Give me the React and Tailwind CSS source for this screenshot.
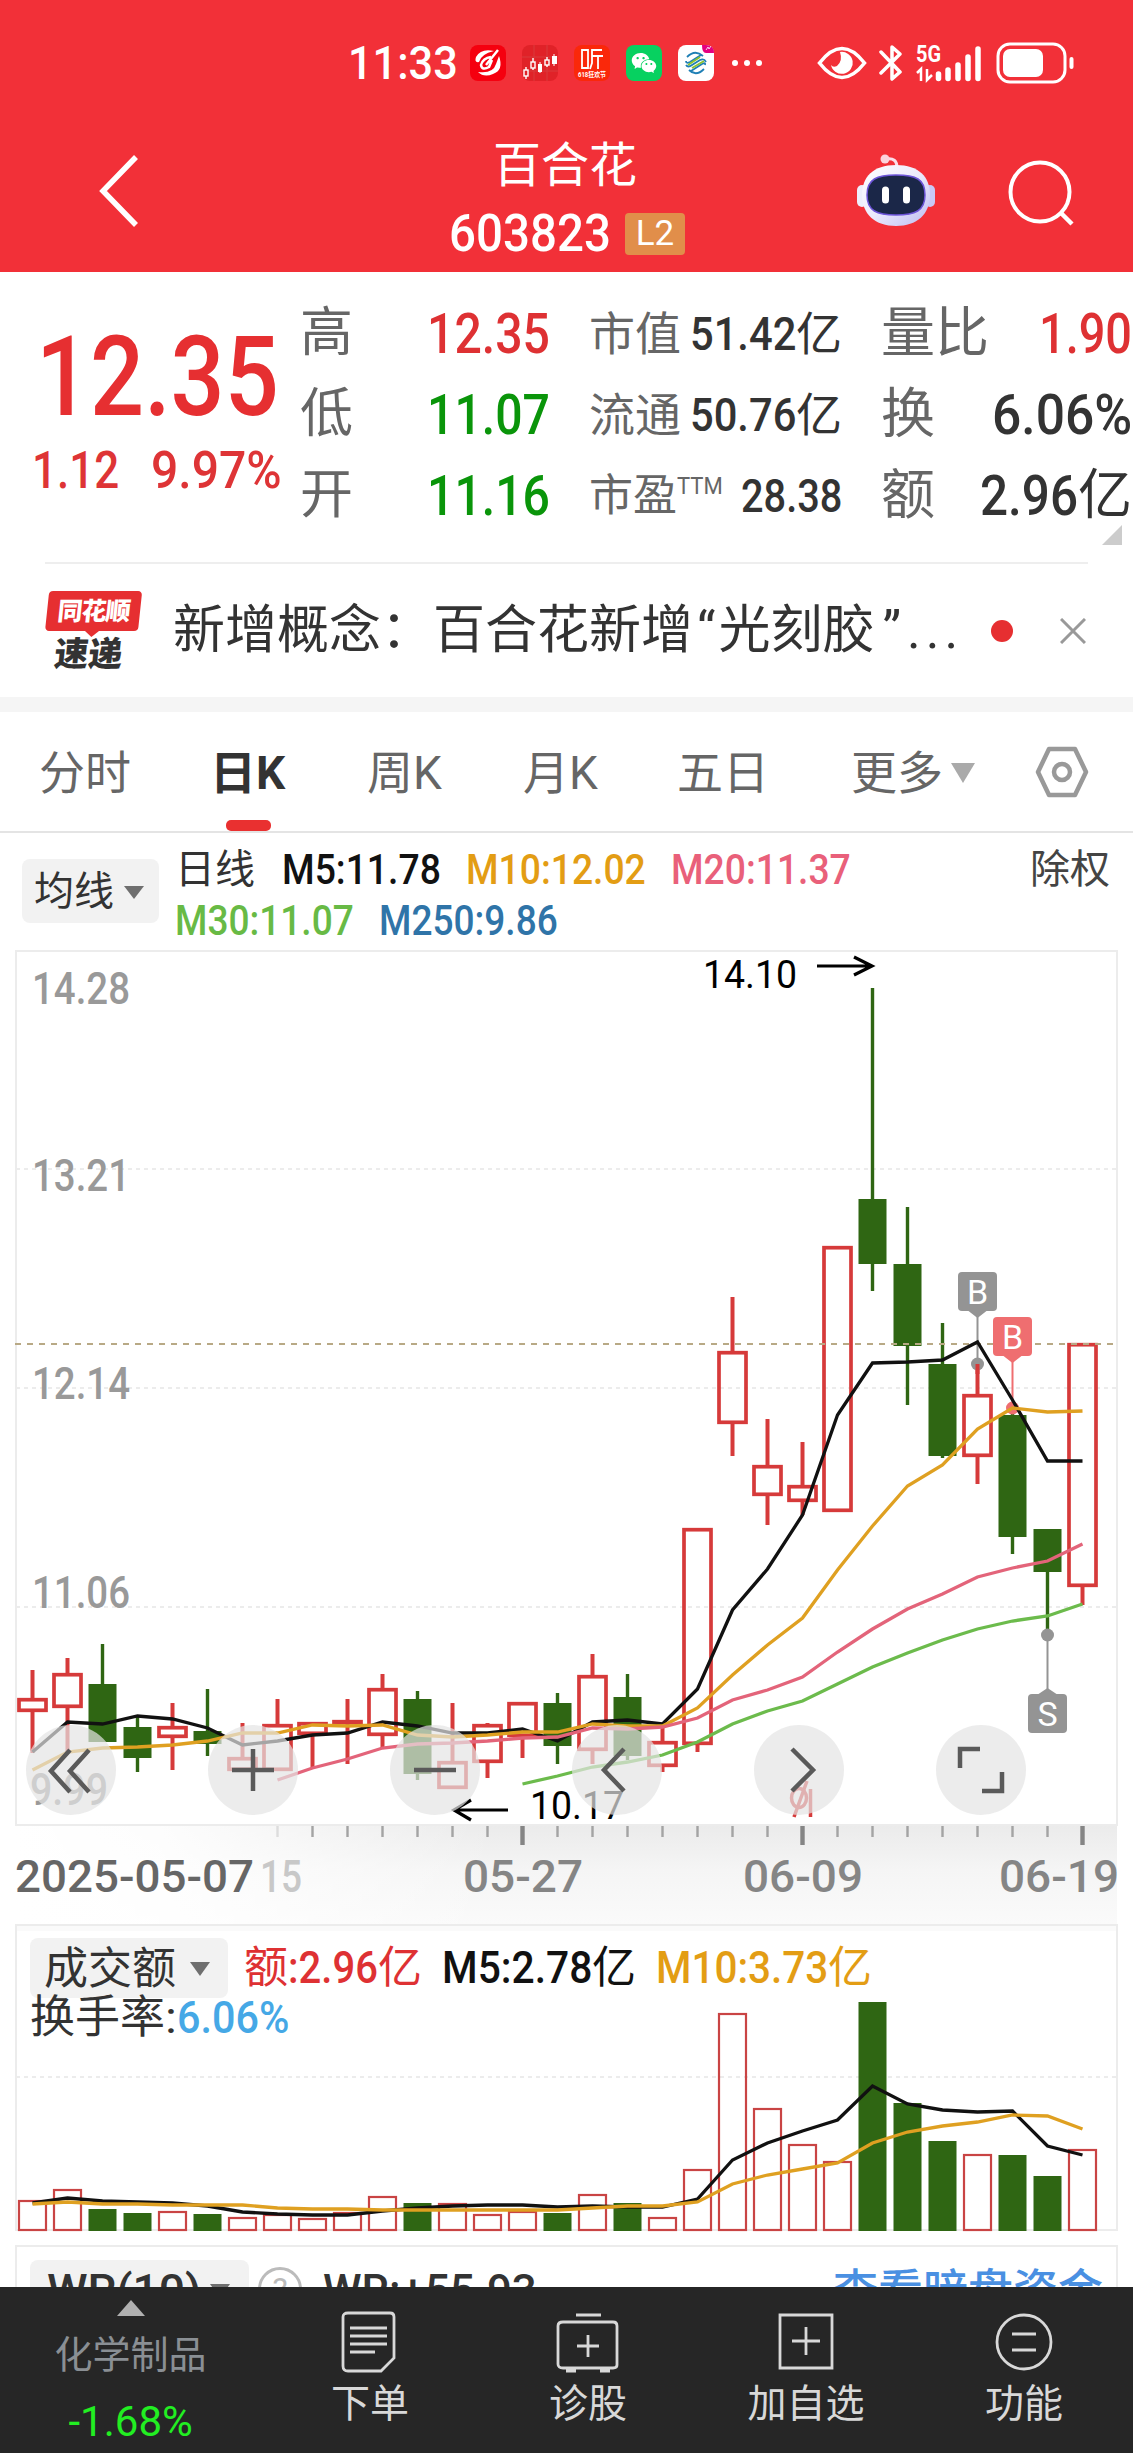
import React, { useLayoutEffect, useRef } from 'react';
import { AiFillWechat } from 'react-icons/ai';

// Stretches or condenses one line of text so it fills the width of its box
const Fit = ({ className = '', children }) => {
  const box = useRef(null);
  const text = useRef(null);

  useLayoutEffect(() => {
    const ratio = box.current.clientWidth / text.current.offsetWidth;
    text.current.style.transform = `scaleX(${ratio})`;
  }, []);

  return (
    <span ref={box} className={`block shrink-0 whitespace-nowrap leading-none ${className}`}>
      <span ref={text} className="inline-block origin-left">{children}</span>
    </span>
  );
};

const StatusBar = () => (
  <div className="flex h-[126px] items-center pl-[348px]">
    <Fit className="w-[110px] text-[46px] font-medium">11:33</Fit>
    <div className="ml-3 flex gap-4">
      <svg className="h-9 w-9" viewBox="0 0 36 36">
        <rect width="36" height="36" rx="8" fill="#f5000f" />
        <path d="M24 6 Q11 3 6 12 Q4 18 9 17 Q11 9 24 6Z" fill="#fff" />
        <path d="M29 11 Q34 25 23 29 Q14 33 8 27 Q23 29 26 19Z" fill="#fff" />
        <path d="M28 5 L16 20 M21 12 Q13 13 11 20 Q12 26 19 22 L22 15" fill="none" stroke="#fff" strokeWidth="2.500" />
      </svg>
      <svg className="h-9 w-9" viewBox="0 0 36 36">
        <rect width="36" height="36" rx="8" fill="#e02228" />
        <path d="M12 0V36 M25 0V36 M0 12H36 M0 26H36" stroke="#d93a3c" strokeWidth="1" />
        <g fill="none" stroke="#fff" strokeWidth="1.4">
          <path d="M4 22V34 M11 13V25 M25 12V22" />
          <rect x="2" y="25" width="4" height="6" fill="#e02228" />
          <rect x="9" y="17" width="4" height="6" fill="#e02228" />
          <rect x="23" y="15" width="4" height="5" fill="#e02228" />
        </g>
        <path d="M16 19h4v8h-4z M30 11h5v8h-5z" fill="#fff" />
        <path d="M18 17V28 M32 9V21" stroke="#fff" />
      </svg>
      <svg className="h-9 w-9" viewBox="0 0 36 36">
        <rect width="36" height="36" rx="8" fill="#fa280a" />
        <g fill="none" stroke="#fff" strokeWidth="1.8">
          <path d="M8 5H14V23H8Z M28 5H18V18L16 24 M18 11H29 M24 11V24" />
        </g>
        <text x="4" y="32" textLength="28" lengthAdjust="spacingAndGlyphs" fontSize="6.500" fontWeight="700" fill="#fff">618狂欢节</text>
      </svg>
      <div className="flex h-9 w-9 items-center justify-center rounded-lg bg-[#07d160] text-[28px]">
        <AiFillWechat />
      </div>
      <svg className="h-9 w-9" viewBox="0 0 36 36">
        <rect width="36" height="36" rx="8" fill="#fff" />
        <path d="M24 0h4q8 0 8 8H28q-4 0-4-8Z" fill="#e5007f" />
        <path d="M28 5l2-3 1 2 2-3" stroke="#fff" fill="none" strokeWidth=".8" />
        <g fill="none" strokeWidth="1.8">
          <path d="M9 12 Q17 4 25 11 M8 16 Q8 19 12 17 L23 10 M8 20 Q10 23 14 20 L22 15 Q26 13 28 17 M27 20 Q28 17 24 19 L13 26 M11 25 Q18 32 26 24" stroke="#1f7fb5" />
          <path d="M10 20 L22 12 M14 23 L26 16" stroke="#8cc22e" />
        </g>
      </svg>
    </div>
    <div className="ml-[18px] flex gap-[6px]">
      <i className="h-1.5 w-1.5 rounded-full bg-white" />
      <i className="h-1.5 w-1.5 rounded-full bg-white" />
      <i className="h-1.5 w-1.5 rounded-full bg-white" />
    </div>
    <svg className="ml-[55px] h-9 w-[50px]" viewBox="0 0 50 36">
      <path d="M2.500 18 Q25 -11 47.500 18 Q25 47 2.500 18Z" fill="none" stroke="#fff" strokeWidth="3.600" />
      <path d="M23 7 A11 11 0 1 1 14 20 Q16 23 20 21 Q26 16 23 7Z" fill="#fff" />
    </svg>
    <svg className="ml-3 h-[38px] w-6" viewBox="0 0 24 38">
      <path d="M2 8 L21 28 L13 35 V3 L21 10 L2 29" fill="none" stroke="#fff" strokeWidth="3.500" strokeLinecap="round" strokeLinejoin="round" />
    </svg>
    <svg className="ml-[13px] h-10 w-[66px]" viewBox="0 0 66 40">
      <text x="0" y="19" textLength="25" lengthAdjust="spacingAndGlyphs" fontSize="23" fontWeight="700" fill="#fff">5G</text>
      <path d="M1 30 L5 26 V38 M11 26 V37 L16 32" fill="none" stroke="#fff" strokeWidth="2.500" />
      <path d="M22.500 31V35.500 M32 27V35.500 M42 22V35.500 M52 14V35.500 M62 6V35.500" stroke="#fff" strokeWidth="5.500" strokeLinecap="round" />
    </svg>
    <svg className="ml-3.5 h-[42px] w-20" viewBox="0 0 80 42">
      <rect x="2" y="2" width="67" height="38" rx="12" fill="none" stroke="#fff" strokeWidth="3" />
      <rect x="7" y="7" width="40" height="28" rx="7" fill="#fff" />
      <path d="M75.500 17V25" stroke="#fff" strokeWidth="4" strokeLinecap="round" />
    </svg>
  </div>
);

const TitleBar = () => (
  <div className="flex h-[146px] items-start">
    <svg className="ml-[95px] mt-[27px] h-[76px] w-12" viewBox="0 0 48 76">
      <path d="M41 4 L8 38 L41 72" fill="none" stroke="#fff" strokeWidth="5.500" />
    </svg>
    <div className="ml-[305px] mt-[16px] flex w-[238px] flex-col items-center">
      <h1 className="-ml-1 text-[48px] leading-[48px]">百合花</h1>
      <div className="mt-[18px] flex items-center gap-[14px]">
        <Fit className="w-[162px] text-[51px] font-medium">603823</Fit>
        <span className="flex h-[42px] w-[60px] items-center justify-center rounded bg-[#e18e4a] text-[35px] leading-none">L2</span>
      </div>
    </div>
    <svg className="ml-[171px] mt-[28px] h-[75px] w-[78px]" viewBox="0 0 78 75">
      <defs>
        <linearGradient id="helmet" x1="0" y1="0" x2="1" y2="1">
          <stop offset="0" stopColor="#fff" />
          <stop offset=".5" stopColor="#eceafc" />
          <stop offset="1" stopColor="#bdbcf2" />
        </linearGradient>
      </defs>
      <path d="M29 5 Q40 3 40 14" fill="none" stroke="#fbdde8" strokeWidth="3" />
      <circle cx="28" cy="5" r="4.500" fill="#fbd3dc" />
      <rect y="31" width="10" height="22" rx="5" fill="#eeeefc" />
      <rect x="68" y="31" width="10" height="22" rx="5" fill="#c9c8f6" />
      <path d="M39 11 C62 11 73 23 73 41 C73 60 60 72 39 72 C18 72 5 60 5 41 C5 23 16 11 39 11Z" fill="url(#helmet)" />
      <path d="M39 21 C59 21 68 25 68 41 C68 57 58 61 39 61 C20 61 10 57 10 41 C10 25 20 21 39 21Z" fill="#1b2748" stroke="#6d55d8" strokeWidth="1.500" />
      <path d="M28.500 36V46 M49.500 36V46" stroke="#fff" strokeWidth="7" strokeLinecap="round" />
    </svg>
    <svg className="ml-[72px] mt-[33px] h-[70px] w-[70px]" viewBox="0 0 70 70">
      <circle cx="33" cy="33" r="29.500" fill="none" stroke="#fff" strokeWidth="4" />
      <path d="M54 54 L65 65" stroke="#fff" strokeWidth="4.500" />
    </svg>
  </div>
);

const QuotePanel = () => (
  <section className="flex h-[290px] pt-[21px]">
    <div className="w-[300px] pl-[36px] text-[#e62f31]">
      <Fit className="mt-[28px] w-[243px] text-[112px] font-medium">12.35</Fit>
      <div className="mt-[12px] flex justify-between pr-[18px] text-[51px] font-medium text-[#de3436]">
        <Fit className="-ml-1 w-[87px]">1.12</Fit>
        <Fit className="w-[131px]">9.97%</Fit>
      </div>
    </div>

    <div className="flex w-[250px] flex-col text-[53px] leading-none text-[#666]">
      <div className="flex h-[81px] items-center justify-between">高<Fit className="w-[123px] text-[56px] font-medium text-[#de3133]">12.35</Fit></div>
      <div className="flex h-[81px] items-center justify-between">低<Fit className="w-[123px] text-[56px] font-medium text-[#0a950a]">11.07</Fit></div>
      <div className="flex h-[81px] items-center justify-between">开<Fit className="w-[123px] text-[56px] font-medium text-[#0a950a]">11.16</Fit></div>
    </div>

    <div className="ml-[39px] flex w-[253px] flex-col text-[46px] leading-none text-[#666]">
      <div className="flex h-[81px] items-center">
        市值<Fit className="ml-auto w-[106px] font-medium text-[#333]">51.42</Fit><span className="text-[#333]">亿</span>
      </div>
      <div className="flex h-[81px] items-center">
        流通<Fit className="ml-auto w-[106px] font-medium text-[#333]">50.76</Fit><span className="text-[#333]">亿</span>
      </div>
      <div className="flex h-[81px] items-center">
        <span className="text-[44px]">市盈</span>
        <Fit className="mb-5 w-[46px] text-[24px]">TTM</Fit>
        <Fit className="ml-auto w-[101px] font-medium text-[#333]">28.38</Fit>
      </div>
    </div>

    <div className="ml-[39px] flex w-[251px] flex-col text-[54px] leading-none text-[#666]">
      <div className="flex h-[81px] items-center justify-between">量比<Fit className="w-[93px] text-[56px] font-medium text-[#de3133]">1.90</Fit></div>
      <div className="flex h-[81px] items-center justify-between">换<Fit className="w-[140px] text-[56px] font-medium text-[#333]">6.06%</Fit></div>
      <div className="flex h-[81px] items-center">
        额<Fit className="ml-auto w-[98px] text-[56px] font-medium text-[#333]">2.96</Fit><span className="text-[#333]">亿</span>
      </div>
      <i className="-mt-[11px] ml-auto mr-[10px] h-0 w-0 border-b-[20px] border-l-[20px] border-b-[#ccc] border-l-transparent" />
    </div>
  </section>
);

const NewsBar = () => (
  <section className="mx-[45px] flex h-[135px] items-center border-t-2 border-[#eee] text-[#333]">
    <div className="flex w-[97px] -skew-x-6 flex-col items-start font-black leading-none">
      <div className="flex h-10 w-[93px] items-center justify-center rounded bg-[#e62f31] text-[25px] tracking-[-1px] text-white">同花顺</div>
      <i className="ml-[40px] h-0 w-0 border-x-[7px] border-t-[6px] border-x-transparent border-t-[#e62f31]" />
      <span className="ml-3 text-[34px]">速递</span>
    </div>
    <p className="ml-[31px] flex w-[785px] shrink-0 whitespace-nowrap text-[52px] leading-none">
      新增概念：百合花新增<span className="ml-1">“</span><span className="ml-[3px]">光刻胶</span><span className="ml-2">”</span>
      <span className="ml-1.5 tracking-[5px]">...</span>
    </p>
    <i className="ml-[33px] h-[22px] w-[22px] rounded-full bg-[#e62f31]" />
    <svg className="ml-[47px] h-[26px] w-[26px]" viewBox="0 0 26 26">
      <path d="M1 1 L25 25 M25 1 L1 25" stroke="#999" strokeWidth="3" />
    </svg>
  </section>
);

const Tabs = () => (
  <nav className="flex h-[121px] items-center border-b-2 border-[#e4e4e4] pt-[3px] text-[46px] leading-none text-[#666]">
    <span className="ml-[39px] w-[171px]">分时</span>
    <span className="relative flex h-full w-[157px] items-center font-bold text-[#333]">
      日K
      <i className="absolute bottom-0 left-[16px] h-[11px] w-[45px] rounded-[5px] bg-[#e93030]" />
    </span>
    <span className="w-[156px]">周K</span>
    <span className="w-[154px]">月K</span>
    <span className="w-[174px]">五日</span>
    <span>更多</span>
    <i className="ml-2 h-0 w-0 border-x-[12px] border-t-[20px] border-x-transparent border-t-[#aaa]" />
    <svg className="mb-[3px] ml-[60px] h-[52px] w-[54px]" viewBox="0 0 54 52">
      <path d="M14 3 H40 L51 26 L40 49 H14 L3 26Z" fill="none" stroke="#999" strokeWidth="4.500" strokeLinejoin="round" />
      <circle cx="27" cy="26" r="8" fill="none" stroke="#999" strokeWidth="4.500" />
    </svg>
  </nav>
);

const AverageBar = () => (
  <section className="flex h-[117px] items-start text-[42px] leading-none">
    <button className="ml-[22px] mt-[26px] flex h-[64px] w-[137px] items-center rounded-lg bg-[#f2f2f2] pl-3 pt-0.5 text-[40px] leading-none text-[#333]">
      均线
      <i className="ml-2.5 h-0 w-0 border-x-[10px] border-t-[13px] border-x-transparent border-t-[#6f6f6f]" />
    </button>
    <div className="ml-[16px] mt-[11px] w-[700px] font-medium">
      <div className="flex h-[51px] items-center">
        <span className="w-[107px] text-[40px] font-normal text-[#333]">日线</span>
        <Fit className="w-[159px] text-[#111]">M5:11.78</Fit>
        <Fit className="ml-[25px] w-[180px] text-[#e39d14]">M10:12.02</Fit>
        <Fit className="ml-[25px] w-[180px] text-[#e9607a]">M20:11.37</Fit>
      </div>
      <div className="flex h-[51px] items-center">
        <Fit className="w-[179px] text-[#68ba45]">M30:11.07</Fit>
        <Fit className="ml-[25px] w-[179px] text-[#2f74a8]">M250:9.86</Fit>
      </div>
    </div>
    <span className="ml-auto mr-[23px] mt-[17px] text-[40px] text-[#444]">除权</span>
  </section>
);

// [up, high, bodyTop, bodyBottom, low] in chart coordinates
const candles = [
  [1, 1670, 1698, 1712, 1753], [1, 1658, 1673, 1708, 1752], [0, 1644, 1684, 1742, 1742],
  [0, 1717, 1727, 1758, 1772], [1, 1703, 1726, 1738, 1770], [0, 1689, 1731, 1744, 1756],
  [1, 1723, 1757, 1771, 1771], [1, 1699, 1724, 1771, 1771], [1, 1722, 1722, 1735, 1767],
  [1, 1699, 1720, 1724, 1764], [1, 1674, 1688, 1736, 1748], [0, 1691, 1699, 1774, 1780],
  [1, 1703, 1761, 1789, 1789], [1, 1723, 1724, 1763, 1778], [1, 1702, 1702, 1737, 1758],
  [0, 1693, 1703, 1746, 1764], [1, 1654, 1675, 1751, 1764], [0, 1674, 1697, 1756, 1760],
  [1, 1725, 1741, 1767, 1772], [1, 1528, 1528, 1745, 1752], [1, 1297, 1351, 1424, 1456],
  [1, 1419, 1465, 1496, 1525], [1, 1442, 1485, 1502, 1515], [1, 1246, 1246, 1512, 1512],
  [0, 988, 1199, 1264, 1291], [0, 1207, 1264, 1346, 1405], [0, 1323, 1364, 1456, 1458],
  [1, 1364, 1394, 1457, 1484], [0, 1407, 1415, 1537, 1554], [0, 1529, 1529, 1572, 1634],
  [1, 1343, 1343, 1587, 1605],
];

const ma5 = [1752, 1722, 1724, 1716, 1719, 1728, 1745, 1741, 1735, 1733, 1722, 1726, 1733, 1733, 1729, 1741, 1722, 1720, 1724, 1689, 1610, 1569, 1515, 1415, 1363, 1362, 1360, 1342, 1400, 1461, 1461];
const ma10 = [1770, 1752, 1748, 1747, 1745, 1741, 1733, 1733, 1725, 1726, 1725, 1735, 1737, 1735, 1732, 1732, 1724, 1726, 1726, 1708, 1675, 1645, 1618, 1570, 1526, 1486, 1465, 1429, 1408, 1412, 1411];
const ma20 = [1780, 1768, 1759, 1748, 1744, 1743, 1741, 1738, 1737, 1728, 1729, 1727, 1718, 1700, 1690, 1677, 1652, 1629, 1609, 1594, 1577, 1568, 1561, 1544];
const ma30 = [1784, 1776, 1767, 1762, 1755, 1742, 1724, 1711, 1701, 1684, 1667, 1653, 1640, 1629, 1621, 1616, 1604];

const volumes = [2200, 2189, 2209, 2213, 2211, 2214, 2217, 2214, 2218, 2212, 2196, 2203, 2203, 2214, 2211, 2213, 2194, 2203, 2217, 2169, 2013, 2108, 2144, 2161, 2002, 2103, 2141, 2154, 2155, 2176, 2149];
const volMa5 = [2203, 2198, 2201, 2202, 2203, 2206, 2212, 2214, 2215, 2215, 2211, 2208, 2206, 2205, 2205, 2207, 2206, 2207, 2207, 2199, 2160, 2143, 2131, 2120, 2086, 2104, 2110, 2112, 2111, 2146, 2155];
const volMa10 = [2204, 2202, 2204, 2204, 2205, 2205, 2205, 2208, 2209, 2209, 2210, 2210, 2210, 2210, 2210, 2210, 2208, 2206, 2206, 2202, 2184, 2175, 2169, 2163, 2143, 2132, 2126, 2122, 2115, 2116, 2129];

const xAt = (i) => 32.5 + i * 35;

const Line = ({ data, start = 0, color }) => (
  <polyline
    points={data.map((y, i) => `${xAt(i + start)},${y}`).join(' ')}
    fill="none"
    stroke={color}
    strokeWidth="3.300"
  />
);

const Candle = ({ x, candle }) => {
  const [up, high, top, bottom, low] = candle;
  if (!up) {
    return (
      <g fill="#2f6613">
        <rect x={x - 1.7} y={high} width="3.400" height={low - high} />
        <rect x={x - 14} y={top} width="28" height={bottom - top} />
      </g>
    );
  }
  return (
    <g>
      <path d={`M${x} ${high}V${top} M${x} ${bottom}V${low}`} stroke="#d63a3a" strokeWidth="4" />
      <rect x={x - 13.5} y={top + 1.7} width="27" height={Math.max(bottom - top - 3.4, 1)} fill="none" stroke="#d63a3a" strokeWidth="3.700" />
    </g>
  );
};

const Label = ({ x, y, w, size = 44, fill = '#999', weight = 500, children }) => (
  <text x={x} y={y} textLength={w} lengthAdjust="spacingAndGlyphs" fontSize={size} fontWeight={weight} fill={fill}>
    {children}
  </text>
);

const Marker = ({ x, y, color, letter, dotY, up }) => (
  <g>
    <path d={up ? `M${x} ${y}V${dotY}` : `M${x} ${y + 39}V${dotY}`} stroke={color} strokeWidth="2" />
    <rect x={x - 19.5} y={y} width="39" height="39" rx="4" fill={color} />
    <path d={up ? `M${x - 9} ${y}L${x} ${y - 6}L${x + 9} ${y}Z` : `M${x - 9} ${y + 39}L${x} ${y + 46}L${x + 9} ${y + 39}Z`} fill={color} />
    <text x={x} y={y + 31.5} textAnchor="middle" fontSize="34" fill="#fff">{letter}</text>
    <circle cx={x} cy={dotY} r="6.500" fill={color} />
  </g>
);

const tools = [
  <path d="M44 25 L25 46 L44 67 M63 25 L44 46 L63 67" />,
  <path d="M24 45H66 M45 24V66" />,
  <path d="M24 45H66" />,
  <path d="M52 24 L32 45 L52 66" />,
  <path d="M38 24 L59 45 L38 66" />,
  <path d="M24 43V24H44 M66 47V66H46" />,
];

const KLineChart = () => (
  <section className="relative h-[974px]">
    <svg className="block h-full w-full" viewBox="0 950 1133 974">
      <defs>
        <linearGradient id="axisShade" x1="0" y1="0" x2="0" y2="1">
          <stop offset="0" stopColor="#ebebeb" />
          <stop offset=".45" stopColor="#f5f5f5" />
          <stop offset="1" stopColor="#fafafa" />
        </linearGradient>
        <linearGradient id="axisFade" x1="0" y1="0" x2="1" y2="0">
          <stop offset="0" stopColor="#fff" />
          <stop offset=".3" stopColor="#fff" stopOpacity=".9" />
          <stop offset="1" stopColor="#fff" stopOpacity="0" />
        </linearGradient>
      </defs>
      <rect x="15" y="1826" width="1102" height="98" fill="url(#axisShade)" />
      <rect x="15" y="1826" width="480" height="98" fill="url(#axisFade)" />
      <rect x="16" y="951" width="1101" height="874" fill="none" stroke="#ececec" strokeWidth="2" />
      <path d="M16 1169H1116 M16 1388H1116 M16 1607H1116" stroke="#ececec" strokeWidth="2" strokeDasharray="4 4" />

      <Label x="32" y="1004" w="98">14.28</Label>
      <Label x="32" y="1191" w="98">13.21</Label>
      <Label x="32" y="1399" w="98">12.14</Label>
      <Label x="32" y="1608" w="98">11.06</Label>
      <Label x="30" y="1805" w="78">9.99</Label>

      {candles.map((candle, i) => <Candle key={i} x={xAt(i)} candle={candle} />)}
      <path d="M15 1344H1116" stroke="#b8a985" strokeWidth="2" strokeDasharray="6 6" />

      <Marker x={977.5} y={1272} color="#949494" letter="B" dotY={1364} />
      <Marker x={1012.5} y={1317} color="#ef6e70" letter="B" dotY={1408} />
      <Marker x={1047.5} y={1694} color="#949494" letter="S" dotY={1635} up />
      <path d="M977.500 1364V1374" stroke="#d63a3a" strokeWidth="4" />

      <Line data={ma5} color="#111" />
      <Line data={ma10} color="#dfa021" />
      <Line data={ma20} start={7} color="#e3647a" />
      <Line data={ma30} start={14} color="#6cbb4c" />

      <Label x="703" y="988" w="94" size={39} fill="#000" weight={400}>14.10</Label>
      <path d="M817 966H872 M854 957L872 966L854 975" fill="none" stroke="#000" strokeWidth="3.200" />
      <Label x="530" y="1819" w="94" size={39} fill="#000" weight={400}>10.17</Label>
      <path d="M508 1810H454 M471 1800L454 1810L471 1820" fill="none" stroke="#000" strokeWidth="3.200" />
      <g fill="none" stroke="#d63a3a" strokeWidth="3.500">
        <ellipse cx="799" cy="1798" rx="7.500" ry="9.500" />
        <path d="M807 1781L794 1817 M810.500 1789V1817" />
      </g>

      {Array.from({ length: 24 }, (_, k) => k + 7).map((i) => {
        const major = i % 8 === 6;
        return (
          <rect
            key={i}
            x={xAt(i) - (major ? 2.2 : 1.2)}
            y="1826"
            width={major ? 4.4 : 2.4}
            height={major ? 19 : 11}
            fill={i === 7 ? '#ddd' : major ? '#858585' : '#a3a3a3'}
          />
        );
      })}
      <Label x="15" y="1892" w="239" fill="#666">2025-05-07</Label>
      <Label x="260" y="1892" w="42" fill="#c8c8c8">15</Label>
      <Label x="463" y="1892" w="120" fill="#858585">05-27</Label>
      <Label x="743" y="1892" w="120" fill="#858585">06-09</Label>
      <Label x="999" y="1892" w="120" fill="#858585">06-19</Label>
    </svg>

    {/* floating chart controls */}
    <div className="absolute left-[26px] top-[775px] flex gap-[92px]">
      {tools.map((icon, i) => (
        <button key={i} className="h-[90px] w-[90px] rounded-full bg-[#e4e4e4]/70">
          <svg className="h-[90px] w-[90px]" viewBox="0 0 90 90" fill="none" stroke="#5a5a5a" strokeWidth="4.500">{icon}</svg>
        </button>
      ))}
    </div>
  </section>
);

const VolumeChart = () => (
  <section className="relative h-[313px]">
    <svg className="block h-full w-full" viewBox="0 1924 1133 313">
      <rect x="16" y="1924" width="1101" height="7" fill="#fafafa" />
      <path d="M15 1925H1118 M16 1924V2230 M1117 1924V2230 M15 2230H1118" stroke="#ececec" strokeWidth="2" />
      <path d="M16 2077H1116" stroke="#ececec" strokeWidth="2" strokeDasharray="4 4" />
      {volumes.map((y, i) => (
        candles[i][0]
          ? <rect key={i} x={xAt(i) - 13.5} y={y + 1} width="27" height={2230 - y - 1} fill="none" stroke="#c94444" strokeWidth="2.200" />
          : <rect key={i} x={xAt(i) - 14} y={y} width="28" height={2231 - y} fill="#2f6613" />
      ))}
      <Line data={volMa5} color="#111" />
      <Line data={volMa10} color="#dfa021" />
    </svg>

    {/* indicator readings lie over the plot */}
    <div className="absolute left-[30px] top-[14px] leading-none">
      <div className="flex items-center text-[44px]">
        <button className="flex h-[60px] w-[198px] items-center rounded-lg bg-[#f2f2f2] pl-3.5 pt-0.5 text-[44px] leading-none text-[#333]">
          成交额
          <i className="ml-3.5 h-0 w-0 border-x-[10px] border-t-[14px] border-x-transparent border-t-[#6f6f6f]" />
        </button>
        <span className="ml-4 text-[#de3133]">额</span>
        <Fit className="w-[90px] font-medium text-[#de3133]">:2.96</Fit>
        <span className="text-[#de3133]">亿</span>
        <Fit className="ml-[20px] w-[150px] font-medium text-[#111]">M5:2.78</Fit>
        <span className="text-[#111]">亿</span>
        <Fit className="ml-[20px] w-[172px] font-medium text-[#e39d14]">M10:3.73</Fit>
        <span className="text-[#e39d14]">亿</span>
      </div>
      <div className="-mt-[3px] flex items-center text-[45px] text-[#333]">
        换手率<Fit className="w-3">:</Fit>
        <Fit className="w-[112px] font-medium text-[#45a8e6]">6.06%</Fit>
      </div>
    </div>
  </section>
);

const WilliamsPanel = () => (
  <section className="mx-[15px] mt-[8px] flex h-[42px] items-start overflow-hidden border-2 border-b-0 border-[#ececec] text-[44px] leading-none text-[#333]">
    <button className="ml-[13px] mt-[13px] flex h-[62px] w-[219px] shrink-0 items-center rounded-lg bg-[#f2f2f2] pl-3.5 text-[44px] leading-none">
      <Fit className="w-[154px] font-medium">WR(10)</Fit>
      <i className="ml-3 h-0 w-0 border-x-[10px] border-t-[14px] border-x-transparent border-t-[#6f6f6f]" />
    </button>
    <span className="ml-[9px] mt-[20px] flex h-[44px] w-[44px] shrink-0 items-center justify-center rounded-full border-[3px] border-[#bbb] text-[32px] leading-none text-[#bbb]">?</span>
    <Fit className="ml-[21px] mt-[22px] w-[214px] font-medium">WR:+55.93</Fit>
    <span className="ml-auto mr-[13px] mt-[22px] shrink-0 text-[45px] font-medium text-[#4a90e2]">查看暗盘资金</span>
  </section>
);

const navItems = [
  {
    name: '下单',
    icon: <path d="M8 2H50Q54 2 54 6V47L41 60H8Q3 60 3 55V6Q3 2 8 2Z M10 17H47 M10 25H47 M10 33H47 M10 41H35" />,
  },
  {
    name: '诊股',
    icon: <path d="M18 4H43 M5 11H55Q59 11 59 15V54Q59 57 55 57H5Q0 57 0 53V15Q0 11 5 11Z M8 60H18 M42 60H52 M19 35H41 M30 24V46" />,
  },
  { name: '加自选', icon: <path d="M4 4H56V57H4Z M16 30H44 M30 16V44" /> },
  {
    name: '功能',
    icon: (
      <>
        <circle cx="30" cy="31" r="27" />
        <path d="M18 23H42 M18 39H42" />
      </>
    ),
  },
];

const BottomNav = () => (
  <footer className="flex h-[166px] bg-[#262626] text-[39px] leading-none text-[#d8d8d8]">
    <div className="flex w-[261px] flex-col items-center pt-[13px]">
      <i className="h-0 w-0 border-x-[14px] border-b-[16px] border-x-transparent border-b-[#b0b0b0]" />
      <span className="mt-[20px] text-[38px] text-[#8a8f94]">化学制品</span>
      <Fit className="mt-[27px] w-[124px] text-[42px] text-[#22ee22]">-1.68%</Fit>
    </div>
    {navItems.map((item) => (
      <div key={item.name} className="flex w-[218px] flex-col items-center pt-[24px]">
        <svg className="h-[62px] w-[60px] overflow-visible" viewBox="0 0 60 62" fill="none" stroke="#d8d8d8" strokeWidth="2.800">{item.icon}</svg>
        <span className="mt-3">{item.name}</span>
      </div>
    ))}
  </footer>
);

const App = () => {
  return (
    <div className="flex h-[2453px] w-[1133px] flex-col overflow-hidden bg-white font-[Roboto,'Noto_Sans_CJK_SC',sans-serif]">
      <header className="h-[272px] bg-[#f23038] text-white">
        <StatusBar />
        <TitleBar />
      </header>
      <QuotePanel />
      <NewsBar />
      <div className="h-[15px] bg-[#f5f5f5]" />
      <Tabs />
      <AverageBar />
      <KLineChart />
      <VolumeChart />
      <WilliamsPanel />
      <BottomNav />
    </div>
  );
};

export default App;
